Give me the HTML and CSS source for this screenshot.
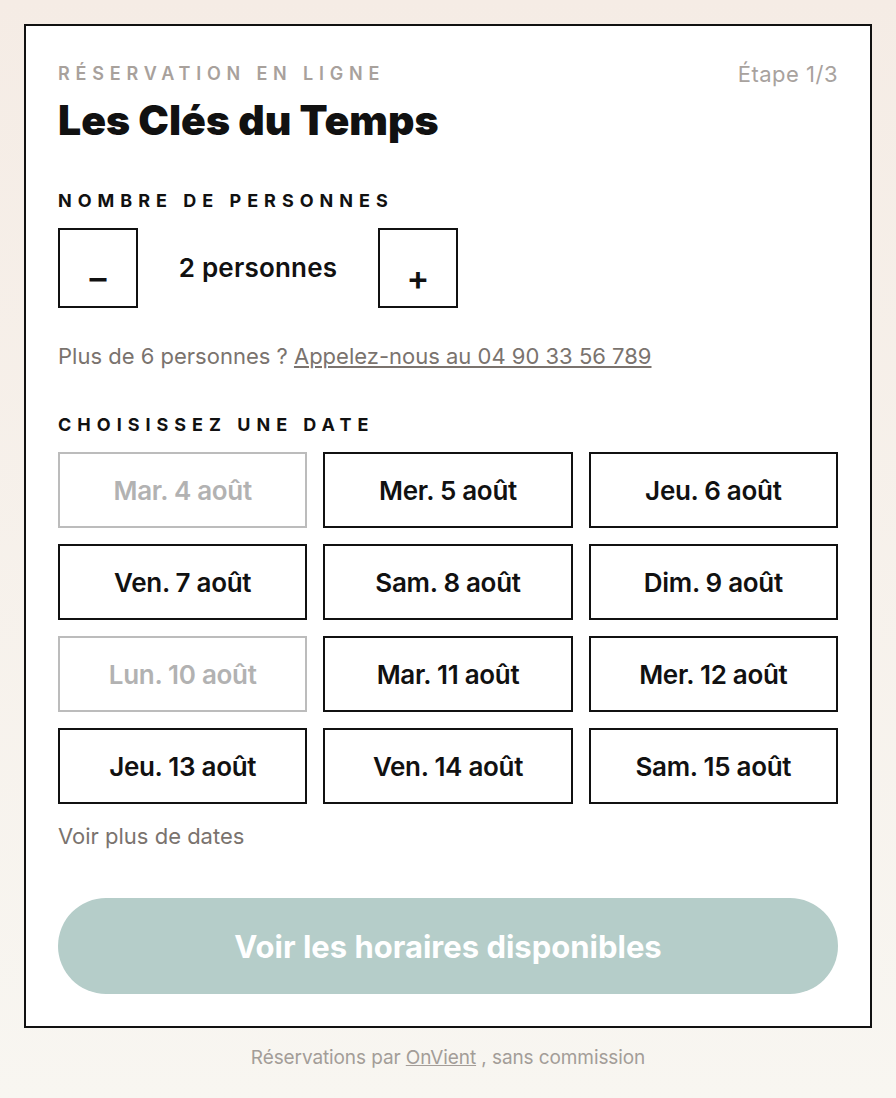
FILE: index.html
```html
<!DOCTYPE html>
<html lang="fr">
<head>
  <meta charset="UTF-8">
  <meta name="viewport" content="width=device-width, initial-scale=1.0">
  <title>Les Clés du Temps – Réservation</title>
  <link rel="stylesheet" href="styles.css">
</head>
<body>

  <div class="card">
    <div class="card-head">
      <span class="eyebrow">Réservation en ligne</span>
      <span class="step">Étape 1/3</span>
    </div>
    <h1 class="title">Les Clés du Temps</h1>

    <h2 class="label">Nombre de personnes</h2>
    <div class="stepper">
      <button class="step-btn minus">–</button>
      <span class="count">2 personnes</span>
      <button class="step-btn plus">+</button>
    </div>
    <p class="note">Plus de 6 personnes ? <a href="#">Appelez-nous au 04 90 33 56 789</a></p>

    <h2 class="label">Choisissez une date</h2>
    <div class="dates">
      <button class="date off">Mar. 4 août</button>
      <button class="date">Mer. 5 août</button>
      <button class="date">Jeu. 6 août</button>
      <button class="date">Ven. 7 août</button>
      <button class="date">Sam. 8 août</button>
      <button class="date">Dim. 9 août</button>
      <button class="date off">Lun. 10 août</button>
      <button class="date">Mar. 11 août</button>
      <button class="date">Mer. 12 août</button>
      <button class="date">Jeu. 13 août</button>
      <button class="date">Ven. 14 août</button>
      <button class="date">Sam. 15 août</button>
    </div>
    <p class="more">Voir plus de dates</p>

    <button class="submit">Voir les horaires disponibles</button>
  </div>

  <p class="footer">Réservations par <a href="#">OnVient</a> , sans commission</p>

</body>
</html>
```

FILE: styles.css
```css
body {
  font-family: Inter, "Liberation Sans", sans-serif;
  background: linear-gradient(#f5ece5, #f8f6f1);
  margin: 0;
  padding: 24px;
  min-height: 1098px;
  box-sizing: border-box;
  color: #111;
}

.card {
  background: #fff;
  border: 2px solid #111;
  padding: 36px 32px 32px;
}

.card-head {
  display: flex;
  justify-content: space-between;
  align-items: center;
  line-height: 24px;
}

.eyebrow {
  font-size: 18px;
  font-weight: 600;
  letter-spacing: 5.8px;
  text-transform: uppercase;
  color: #a8a19c;
}

.step {
  font-size: 22px;
  color: #a8a29e;
  letter-spacing: 0.5px;
}

.title {
  font-size: 41px;
  line-height: 48px;
  font-weight: 900;
  letter-spacing: 0;
  margin: 10px 0 0;
}

.label {
  font-size: 18px;
  line-height: 22px;
  font-weight: 700;
  letter-spacing: 6px;
  text-transform: uppercase;
  margin: 46px 0 16px;
}

.stepper {
  display: flex;
  align-items: center;
}

.step-btn {
  width: 80px;
  height: 80px;
  background: #fff;
  border: 2px solid #111;
  font-family: inherit;
  font-size: 34px;
  font-weight: 600;
  color: #111;
  padding: 18px 0 0;
}

.count {
  width: 240px;
  text-align: center;
  font-size: 26px;
  font-weight: 600;
  letter-spacing: 0.2px;
  margin-top: -2px;
}

.note {
  font-size: 22px;
  line-height: 28px;
  color: #7a736e;
  margin: 34px 0 0;
}

.note a {
  color: #7a736e;
}

.note + .label {
  margin-top: 44px;
}

.dates {
  display: grid;
  grid-template-columns: repeat(3, 1fr);
  gap: 16px;
}

.date {
  height: 76px;
  background: #fff;
  border: 2px solid #111;
  font-family: inherit;
  font-size: 26px;
  font-weight: 600;
  letter-spacing: -0.3px;
  color: #111;
}

.date.off {
  border-color: #bcbcbc;
  color: #b2b2b2;
}

.more {
  font-size: 22px;
  line-height: 28px;
  color: #7a736e;
  margin: 18px 0 48px;
}

.submit {
  display: block;
  width: 100%;
  height: 96px;
  border: none;
  border-radius: 48px;
  background: #b5cdc9;
  color: #fff;
  font-family: inherit;
  font-size: 31px;
  font-weight: 700;
  letter-spacing: 0;
}

.footer {
  text-align: center;
  font-size: 19px;
  line-height: 24px;
  color: #a39d98;
  letter-spacing: -0.1px;
  margin: 18px 0 0;
}

.footer a {
  color: #a39d98;
}
```
